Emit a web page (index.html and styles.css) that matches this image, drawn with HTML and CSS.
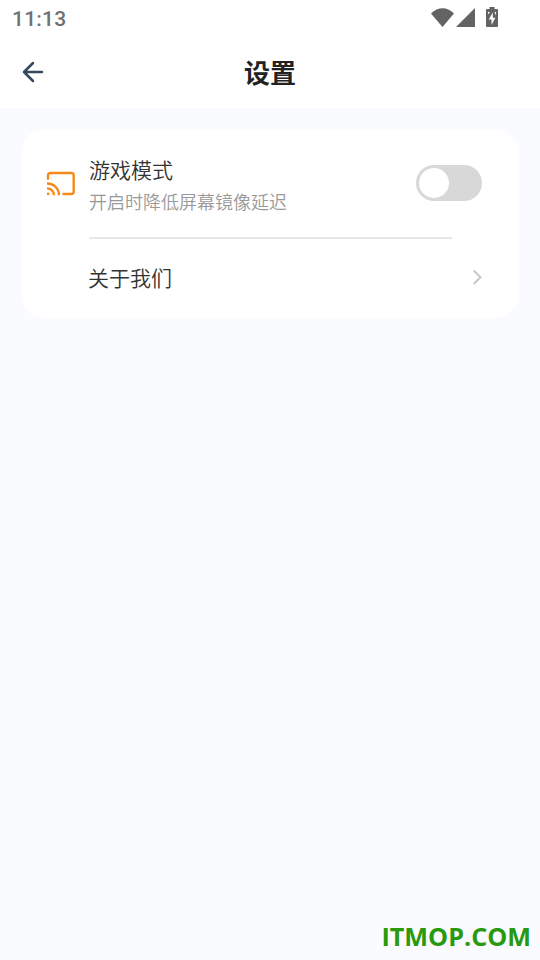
FILE: index.html
```html
<!DOCTYPE html>
<html lang="zh-CN">
<head>
<meta charset="utf-8">
<title>设置</title>
<link rel="stylesheet" href="styles.css">
</head>
<body>
<header class="top">
  <div class="status">
    <span class="clock">11:13</span>
    <svg class="status-icons" width="70" height="24" viewBox="0 0 70 24" fill="#636363">
      <path d="M1 7.500C8 .500 17 .500 24 7.500L12.500 21Z"/>
      <path d="M45 2V21H26Z"/>
      <path d="M59.500 3V1h5v2H67a1 1 0 0 1 1 1v16a1 1 0 0 1-1 1H57a1 1 0 0 1-1-1V4a1 1 0 0 1 1-1Z"/>
      <path d="M62.800 6.500L58.700 13.600H61.500V19L65.400 11.800H62.800ZM58 6h2l-2 2.500ZM64.500 6H66v3.500Z" fill="#fff"/>
    </svg>
  </div>
  <nav class="bar">
    <svg class="back" width="22" height="22" viewBox="0 0 22 22" fill="none" stroke="#364860" stroke-width="2.500" stroke-linecap="round" stroke-linejoin="round"><path d="M20 11H2M11 2L2 11L11 20"/></svg>
    <h1>设置</h1>
  </nav>
</header>
<main class="card">
  <section class="row game">
    <svg class="cast" width="30" height="26" viewBox="0 0 30 26" fill="none" stroke="#f58a1a" stroke-width="2.400" stroke-linecap="round">
      <path d="M2 7.800V4.500Q2 2 4.500 2H25.200Q27.700 2 27.700 4.500V20.500Q27.700 23 25.200 23H17.500"/>
      <path d="M1 12.500A11.500 11.500 0 0 1 13 24.200M1 17.400A6.800 6.800 0 0 1 8 24.200" stroke-linecap="butt"/>
      <circle cx="2.200" cy="22.900" r="1.300" fill="#f58a1a" stroke="none"/>
    </svg>
    <div class="copy"><div class="name">游戏模式</div><div class="hint">开启时降低屏幕镜像延迟</div></div>
    <div class="switch"><div class="knob"></div></div>
  </section>
  <div class="divider"></div>
  <section class="row about">
    <div class="name">关于我们</div>
    <svg width="10" height="16" viewBox="0 0 10 16" fill="none" stroke="#c8c8c8" stroke-width="2"><path d="M.700 1.500L7.500 8.300L.700 15"/></svg>
  </section>
</main>
<div class="mark">ITMOP.COM</div>
</body>
</html>
```
FILE: styles.css
```css
* { box-sizing: border-box; }
body {
  margin: 0;
  height: 960px;
  display: flex;
  flex-direction: column;
  overflow: hidden;
  background: #fafbfe;
  color: #333;
  font-family: "Noto Sans CJK SC", sans-serif;
}
.top { height: 108px; background: #fff; }
.status {
  height: 36px;
  padding: 6px 40px 0 12px;
  display: flex;
  justify-content: space-between;
}
.clock {
  padding-top: 1px;
  font: 500 21px/25px Roboto, sans-serif;
  letter-spacing: 0.2px;
  color: #707070;
}
.status-icons { display: block; }
.bar {
  height: 72px;
  padding: 0 22px;
  display: grid;
  grid-template-columns: 22px 1fr 22px;
  align-items: center;
}
.back { display: block; }
h1 {
  margin: 0;
  text-align: center;
  font-size: 26px;
  line-height: 38px;
  font-weight: 700;
  color: #222;
}
.card {
  width: 498px;
  height: 189px;
  margin: 21px 21px 0;
  border-radius: 24px;
  background: #fff;
}
.row { display: flex; align-items: center; }
.game { height: 108px; padding: 0 37px 0 25px; }
.cast { flex: none; margin: 1px 13px 0 0; }
.copy { flex: 1; padding-top: 3px; }
.name { font-size: 21px; line-height: 32px; font-weight: 350; }
.hint { font-size: 18px; line-height: 32px; font-weight: 350; color: #999; }
.switch {
  width: 66px;
  height: 36px;
  padding: 3px;
  border-radius: 18px;
  background: #d8d8d8;
}
.knob { width: 30px; height: 30px; border-radius: 50%; background: #fff; }
.divider { height: 2px; margin: 0 67px 0 68px; background: #e8e8e8; }
.about { height: 76px; padding: 0 36px 0 67px; justify-content: space-between; }
.mark {
  margin: auto 9px 6px auto;
  font: 700 25.200px/36px "Open Sans", sans-serif;
  color: #299910;
}
```
